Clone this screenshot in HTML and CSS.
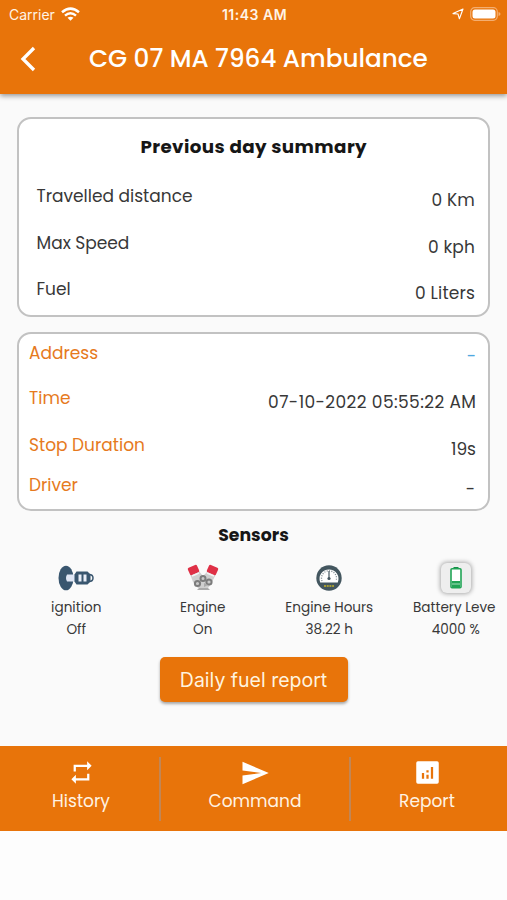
FILE: index.html
```html
<!DOCTYPE html>
<html lang="en">
<head>
<meta charset="utf-8">
<title>Vehicle details</title>
<link rel="stylesheet" href="styles.css">
</head>
<body>
<header class="app-header">
  <div class="status-bar">
    <div class="carrier"><span>Carrier</span>
      <svg class="wifi" viewBox="0 0 19 14"><g fill="none" stroke="#fff" stroke-width="2.5"><path d="M1 5.3Q9.5-2 18 5.3"/><path d="M4 8.6q5.5-4.6 11 0"/></g><path fill="#fff" d="M6.5 10.8q3-2.3 6 0l-3 3z"/></svg>
    </div>
    <span class="clock">11:43 AM</span>
    <div class="status-icons">
      <svg class="location" viewBox="0 0 12 12"><path d="M11 1 7.4 10.8 6 6 1 5.6z" fill="none" stroke="#fff" stroke-width="1.1" stroke-linejoin="round"/></svg>
      <svg class="battery" viewBox="0 0 31 14"><rect x=".7" y=".7" width="26.6" height="12.6" rx="4" fill="none" stroke="#f4ae70" stroke-width="1.2"/><rect x="2.5" y="2.4" width="23" height="9.2" rx="2.5" fill="#fff"/><path d="M28.5 5v4q2-.6 2-2t-2-2" fill="#f4ae70"/></svg>
    </div>
  </div>
  <div class="title-bar">
    <svg class="back" viewBox="0 0 16 26"><path d="M14 2 3 13l11 11" fill="none" stroke="#fff" stroke-width="3.3"/></svg>
    <h1>CG 07 MA 7964 Ambulance</h1>
  </div>
</header>
<main>
  <section class="card summary">
    <h2>Previous day summary</h2>
    <div class="row"><span>Travelled distance</span><span class="value">0 Km</span></div>
    <div class="row"><span>Max Speed</span><span class="value">0 kph</span></div>
    <div class="row"><span>Fuel</span><span class="value">0 Liters</span></div>
  </section>
  <section class="card details">
    <div class="row address"><span class="label">Address</span><span class="value link">-</span></div>
    <div class="row time"><span class="label">Time</span><span class="value">07-10-2022 05:55:22 AM</span></div>
    <div class="row stop"><span class="label">Stop Duration</span><span class="value">19s</span></div>
    <div class="row driver"><span class="label">Driver</span><span class="value">-</span></div>
  </section>
  <h2 class="sensors-title">Sensors</h2>
  <div class="sensors">
    <div class="sensor">
      <svg viewBox="0 0 36 30"><ellipse cx="8" cy="15" rx="7.5" ry="12.3" fill="#39566f"/><path d="M9 11.500h9v7H9q-2-3.500 0-7" fill="#dfe6f5"/><path d="M18.500 8.500h11l3 3v7l-3 3h-11l-2-3v-7z" fill="#39566f"/><path d="M20.500 11.500h3v7h-3zm5 0h3v7h-3z" fill="#e9eef8"/><path d="M31 11.500q4 0 4 3.500t-4 3.500" fill="none" stroke="#39566f" stroke-width="1.500"/></svg>
      <span>ignition</span><span>Off</span>
    </div>
    <div class="sensor">
      <svg viewBox="0 0 36 30"><path d="m5 11 8-4 5 6 6-6 7 4-5 10-3 4H13l-5-6z" fill="#cfcfcf"/><g fill="#df3046"><rect x="-5" y="-4" width="10" height="8" rx="1.500" transform="translate(8.500 7)rotate(-24)"/><rect x="-5" y="-4" width="10" height="8" rx="1.500" transform="translate(27.500 7)rotate(24)"/></g><path d="m7 13 7-3m8 0 7 3" stroke="#f3f3f3" stroke-width="1.500"/><g fill="#c9c9c9" stroke="#7c7c7c" stroke-width="2"><circle cx="12.500" cy="20.500" r="2.600"/><circle cx="18" cy="15.500" r="2.500"/><circle cx="24" cy="19" r="2.600"/></g><path d="M14 25h9l2 2H12zM19 20l4 2-4 2z" fill="#aaa"/></svg>
      <span>Engine</span><span>On</span>
    </div>
    <div class="sensor">
      <svg viewBox="0 0 36 30"><circle cx="18" cy="15" r="12.700" fill="#43565f"/><path d="M9.200 19.500a9.500 9.500 0 1 1 17.600 0z" fill="#fff"/><path d="M11 18a7.500 7.500 0 1 1 14 0" fill="none" stroke="#7d8a90" stroke-width="1.300" stroke-dasharray="1 1.400"/><path d="M18 8v8" stroke="#43565f" stroke-width="1.200"/><circle cx="18" cy="15.500" r="1.600" fill="#43565f"/><path d="M13 23h10" stroke="#a59c35" stroke-width="2" stroke-dasharray="2 .700"/></svg>
      <span>Engine Hours</span><span>38.22 h</span>
    </div>
    <div class="sensor">
      <svg class="tile" viewBox="0 0 30 30"><path d="M12.500 4h5v2h-5z" fill="#168e48"/><rect x="10" y="5.700" width="10" height="19" rx="1" fill="#fff" stroke="#20a455" stroke-width="1.600"/><path d="M11 18h8v6h-8z" fill="#20a455"/><path d="M11 21h8" stroke="#caeed8" stroke-width=".800"/></svg>
      <span>Battery Leve</span><span>4000 %</span>
    </div>
  </div>
  <button class="report-button">Daily fuel report</button>
</main>
<nav class="bottom-nav">
  <a><svg viewBox="0 0 24 24"><path fill="#fff" d="M7 7h10v3l4-4-4-4v3H5v6h2zm10 10H7v-3l-4 4 4 4v-3h12v-6h-2z"/></svg><span>History</span></a>
  <a><svg class="send" viewBox="0 0 24 24"><path fill="#fff" d="M2 21 23 12 2 3v7l15 2-15 2z"/></svg><span>Command</span></a>
  <a><svg viewBox="0 0 24 24"><path fill="#fff" fill-rule="evenodd" d="M3.500 2h17q1.500 0 1.500 1.500v17q0 1.500-1.500 1.500h-17Q2 22 2 20.500v-17Q2 2 3.500 2M7 12.500v5h2v-5zm4-2.500v2h2v-2zm0 4v3.500h2V14zm4-7v10.500h2V7z"/></svg><span>Report</span></a>
</nav>
</body>
</html>
```
FILE: styles.css
```css
* { box-sizing: border-box; }
body { margin: 0; min-height: 900px; background: #fdfdfd; color: #383838; font-family: Poppins, Inter, "Open Sans", sans-serif; }
svg { display: block; }
h1, h2 { margin: 0; }
.app-header { height: 94px; background: #e8740a; color: #fff; box-shadow: 0 2px 5px #0006; position: relative; }
.status-bar { display: grid; grid-template-columns: 1fr auto 1fr; height: 28px; align-items: center; padding: 0 7px 0 9px; font: 14px Inter, sans-serif; color: #fff3e6; }
.carrier, .status-icons { display: flex; align-items: center; gap: 6px; }
.status-icons { justify-content: flex-end; gap: 6px; margin-right: -1px; }
.wifi { width: 19px; height: 14px; }
.clock { font-weight: 600; font-size: 14px; letter-spacing: .5px; }
.location { width: 12px; height: 12px; }
.battery { width: 31px; height: 14px; }
.title-bar { display: flex; height: 61px; align-items: center; padding-left: 20px; }
.back { width: 16px; height: 26px; }
h1 { margin-left: 53px; font-size: 24.7px; font-weight: 500; white-space: nowrap; }
main { height: 652px; padding: 23px 17px 0; background: #fafafa; }
.card { border: 2px solid #c2c2c2; border-radius: 14px; background: #fff; font-size: 17px; }
.summary { height: 200px; padding: 11.500px 13px 0 17.5px; }
h2 { font-size: 18.3px; line-height: 32px; text-align: center; font-weight: 700; letter-spacing: .4px; color: #161616; }
.summary h2 { margin-left: -4px; }
.row { display: flex; justify-content: space-between; line-height: 25px; height: 46.500px; }
.value { margin-top: 4px; }
.summary .value { letter-spacing: .15px; }
.summary .row:nth-child(2) { margin-top: 21.500px; }
.details { height: 179px; margin-top: 15px; padding: 7px 12px 0 10px; }
.label { color: #e67a1d; }
.link { color: #50a8df; margin-top: 2.500px; }
.address { height: 45px; }
.time .value { letter-spacing: .4px; margin-right: -.4px; }
.stop { height: 40px; }
.driver .value { margin-right: 1px; }
.sensors-title { font-size: 17.3px; letter-spacing: 0; line-height: 30px; margin: 9px 0 12.500px; }
.sensors { display: flex; width: 506px; margin-left: -4px; }
.sensor { width: 126.500px; display: flex; flex-direction: column; align-items: center; font-size: 13.600px; line-height: 22px; }
.sensor svg { width: 36px; height: 30px; margin-bottom: 4.500px; }
.sensor .tile { width: 30px; background: #eee; border-radius: 6px; box-shadow: 0 0 4px 1px #aaa; }
.sensor:last-child { padding-right: 3px; }
.sensor:last-child svg, .sensor:last-child span:last-child { margin-left: 3px; }
.report-button { display: block; width: 188px; height: 45px; margin: 16px auto 0; border: 0; border-radius: 5px; background: #e8740a; color: #fff3df; font: 19.500px Inter, sans-serif; box-shadow: 0 2px 3px #0005; padding: 0; }
.bottom-nav { height: 85px; background: #e8740a; color: #fff3e3; display: grid; grid-template-columns: 159px 190px 158px; align-items: center; }
.bottom-nav a { height: 64px; display: flex; flex-direction: column; align-items: center; font-size: 17px; line-height: 25px; padding-top: 2px; }
.bottom-nav a:first-child { padding-left: 3px; }
.bottom-nav a + a { border-left: 2px solid #c18656; }
.bottom-nav a:last-child { padding-right: 4px; }
.bottom-nav svg { width: 27px; height: 27px; margin-bottom: 3px; }
.bottom-nav .send { width: 30px; height: 30px; margin: -1px 0 1px; }
```
